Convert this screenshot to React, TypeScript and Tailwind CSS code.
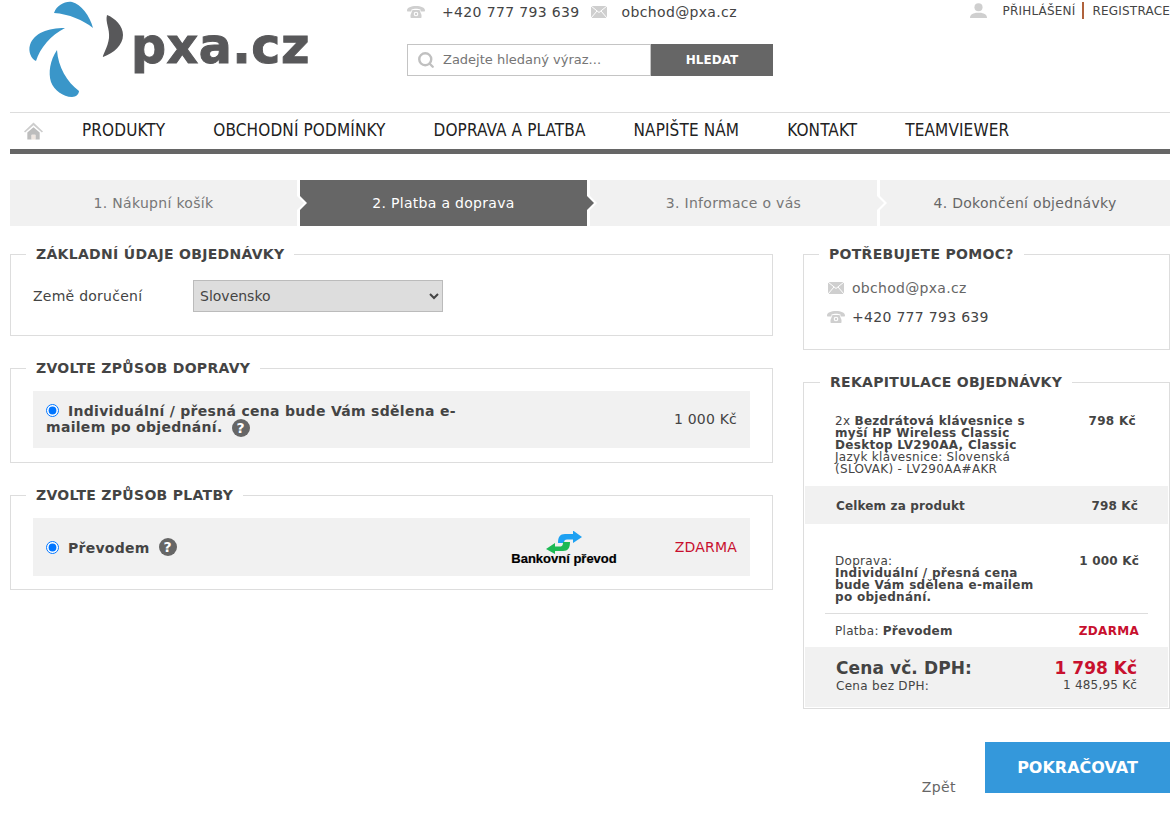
import { Search } from "lucide-react";

const font = { fontFamily: '"DejaVu Sans", sans-serif' };

function PhoneIcon({ className }: { className?: string }) {
  return (
    <svg viewBox="0 0 18 12" className={className} fill="#cfcfcf">
      <path d="M0 4.5C0 1.5 4 0 9 0s9 1.5 9 4.500c0 .8-.3 1-1 1h-2.500c-.7 0-1-.3-1-1V3.500c-1-.6-2.800-.8-4.500-.8s-3.500.2-4.500.8v1c0 .7-.3 1-1 1H1c-.7 0-1-.2-1-1z" />
      <path d="M5.500 4h7l2 5v2.200c0 .5-.3.8-.8.8H4.300c-.5 0-.8-.3-.8-.8V9z" />
      <circle cx="9" cy="8" r="2.300" fill="#fff" />
      <circle cx="9" cy="8" r="1.200" />
    </svg>
  );
}

function MailIcon({ className }: { className?: string }) {
  return (
    <svg viewBox="0 0 16 12" className={className}>
      <rect width="16" height="12" fill="#cfcfcf" />
      <path d="M0 0 8 6.500 16 0M0 12 6 5M16 12l-6-7" stroke="#fff" strokeWidth="1" fill="none" />
    </svg>
  );
}

function Help() {
  return (
    <span className="inline-flex w-[18px] h-[18px] rounded-full bg-[#666] text-white text-[14px] font-bold items-center justify-center align-middle leading-none">
      ?
    </span>
  );
}

function Logo() {
  return (
    <div className="flex items-start w-[310px] h-[100px]">
      <svg viewBox="10 0 121 100" className="w-[121px] h-[100px] shrink-0">
        <path d="M54 13C57 5 65 1 72 2c9 2 18 14 21 26-10-8-24-14-39-15z" fill="#3a96c9" />
        <path d="M65 28c-17 0-31 5-35 17-2 6 1 14 6 16 4-13 15-26 29-33z" fill="#3a96c9" />
        <path d="M57 50c-7 10-9 23-6 32 3 8 12 15 21 15 4 0 7-3 7-6-12-9-21-24-22-41z" fill="#3a96c9" />
        <path d="M107 15c8 3 16 11 16 20 0 10-9 18-20 22-1-1 5-10 6-19 1-9-4-16-2-23z" fill="#58585a" />
      </svg>
      <span
        className="text-[#58585a] font-bold text-[49px] leading-none mt-[22px] tracking-[0.5px]"
        style={{ WebkitTextStroke: "1px #58585a" }}
      >
        pxa.cz
      </span>
    </div>
  );
}

function Header() {
  return (
    <div className="flex h-[112px]">
      <div className="w-[397px] shrink-0">
        <Logo />
      </div>
      <div className="w-[366px] shrink-0 pt-[3px]">
        <div className="flex items-center text-[14px] text-[#444] h-[18px] tracking-[0.35px]">
          <PhoneIcon className="w-[18px] h-[12px]" />
          <span className="ml-[17px]">+420 777 793 639</span>
          <MailIcon className="w-[16px] h-[12px] ml-[11px]" />
          <span className="ml-[15px]">obchod@pxa.cz</span>
        </div>
        <div className="flex mt-[23px] h-[32px]">
          <div className="w-[244px] border border-[#c4c4c4] flex items-center pl-[9px]">
            <Search className="w-[18px] h-[18px] text-[#c0c0c0]" strokeWidth={3.2} />
            <span className="ml-[8px] text-[13px] text-[#757575]">Zadejte hledaný výraz...</span>
          </div>
          <div className="w-[122px] bg-[#666] text-white text-[12px] font-bold flex items-center justify-center">
            HLEDAT
          </div>
        </div>
      </div>
      <div className="flex-1 flex justify-end items-start pt-[2px] text-[12px] text-[#444] tracking-[0.2px]">
        <svg viewBox="0 0 16 14" className="w-[17px] h-[15px] mt-[1px] mr-[15px]" fill="#cfcfcf">
          <circle cx="8" cy="4" r="3.800" />
          <path d="M0 14c0-3 2-4 5.500-5h5c3.500 1 5.500 2 5.500 5z" />
        </svg>
        <span>PŘIHLÁŠENÍ</span>
        <span className="w-[2px] h-[17px] bg-[#b0623c] ml-[7px] mr-[8px]" />
        <span>REGISTRACE</span>
      </div>
    </div>
  );
}

function Nav() {
  const items = ["PRODUKTY", "OBCHODNÍ PODMÍNKY", "DOPRAVA A PLATBA", "NAPIŠTE NÁM", "KONTAKT", "TEAMVIEWER"];
  return (
    <div className="border-t border-[#ddd] border-b-[5px] border-b-[#666] h-[42px] flex items-center">
      <svg viewBox="0 0 20 18" className="w-[19px] h-[18px] ml-[14px] mr-[39px]">
        <path d="M10 0 0 9.500l1.200 1.200L10 3l8.800 7.700L20 9.500z" fill="#cdcdcd" />
        <path d="M3.500 10.500 10 5l6.500 5.500V18H12v-5H8v5H3.500z" fill="#bdbdbd" />
        <rect x="8" y="13" width="4" height="5" fill="#efe6e0" />
      </svg>
      <div
        className="flex gap-[48px] text-[17px] text-[#222] -mt-[1px] tracking-[0.13px]"
        style={{ fontStretch: "condensed" }}
      >
        {items.map((item) => (
          <span key={item}>{item}</span>
        ))}
      </div>
    </div>
  );
}

function Steps() {
  const steps = ["1. Nákupní košík", "2. Platba a doprava", "3. Informace o vás", "4. Dokončení objednávky"];
  return (
    <div className="flex gap-[3px] mt-[26px] h-[46px] text-[14px] tracking-[0.3px]">
      {steps.map((step, i) => (
        <div
          key={step}
          className={
            i === 1
              ? "relative w-[287px] bg-[#666] text-white flex items-center justify-center"
              : i === 3
                ? "relative flex-1 bg-[#f1f1f1] text-[#666] flex items-center justify-center"
                : "relative w-[287px] bg-[#f1f1f1] text-[#777] flex items-center justify-center"
          }
        >
          {step}
          {i < 3 && (
            <>
              <span className="absolute z-10 left-full top-1/2 -translate-y-1/2 w-0 h-0 border-y-[10px] border-y-transparent border-l-[10px] border-l-white" />
              <span
                className={
                  i === 1
                    ? "absolute z-10 left-full top-1/2 -translate-y-1/2 w-0 h-0 border-y-[7px] border-y-transparent border-l-[7px] border-l-[#666]"
                    : "absolute z-10 left-full top-1/2 -translate-y-1/2 w-0 h-0 border-y-[7px] border-y-transparent border-l-[7px] border-l-[#f1f1f1]"
                }
              />
            </>
          )}
        </div>
      ))}
    </div>
  );
}

function Box({ title, className, children }: { title: string; className?: string; children: React.ReactNode }) {
  return (
    <fieldset className={"border border-[#ddd] " + (className || "")}>
      <legend className="ml-[15px] px-[10px] text-[14px] font-bold text-[#444] tracking-[0.3px] leading-[20px]">
        {title}
      </legend>
      {children}
    </fieldset>
  );
}

function Left() {
  return (
    <div className="w-[763px] shrink-0">
      <Box title="ZÁKLADNÍ ÚDAJE OBJEDNÁVKY" className="h-[92px] mt-[18px]">
        <div className="flex items-center pl-[22px] pt-[16px] text-[14px] text-[#444] tracking-[0.25px]">
          <span className="w-[160px]">Země doručení</span>
          <select
            defaultValue="Slovensko"
            className="w-[250px] h-[32px] bg-[#ddd] border border-[#bbb] pl-[2px] text-[14px] text-[#444] tracking-normal"
            style={{ ...font, appearance: "auto" }}
          >
            <option>Slovensko</option>
          </select>
        </div>
      </Box>
      <Box title="ZVOLTE ZPŮSOB DOPRAVY" className="h-[105px] mt-[22px]">
        <div className="mx-[22px] mt-[13px] h-[57px] bg-[#f1f1f1] flex items-center justify-between pl-[13px] pr-[13px]">
          <div className="w-[430px] text-[14px] font-bold text-[#444] leading-[16px] tracking-[0.3px]">
            <input type="radio" defaultChecked className="mr-[9px] align-[-1px]" />
            Individuální / přesná cena bude Vám sdělena e-mailem po objednání.{" "}
            <span className="ml-[4px]"><Help /></span>
          </div>
          <span className="text-[14px] text-[#444] tracking-[0.2px]">1 000 Kč</span>
        </div>
      </Box>
      <Box title="ZVOLTE ZPŮSOB PLATBY" className="h-[105px] mt-[22px]">
        <div className="mx-[22px] mt-[13px] h-[58px] bg-[#f1f1f1] flex items-center pl-[13px] pr-[13px]">
          <div className="w-[464px] pt-[2px] text-[14px] font-bold text-[#444] tracking-[0.25px]">
            <input type="radio" defaultChecked className="mr-[9px] align-[-1px]" />
            Převodem <span className="ml-[4px] relative -top-[2px]"><Help /></span>
          </div>
          <div className="w-[108px] flex flex-col items-center">
            <svg viewBox="546 530 36 23" className="w-[36px] h-[23px]">
              <path d="M558 542c0-6 2-9 7-9h8v-3.500l9 6.500-9 6v-3.500h-6c-2 0-3 1-3 3.500z" fill="#1ea1f2" />
              <path d="M570 541c0 6-2 9-7 9h-8v3l-9-5 9-6v3.500h5c2 0 3-1 3-4.500z" fill="#1db954" />
            </svg>
            <span
              className="text-[13px] font-bold text-black leading-[10px] whitespace-nowrap"
              style={{ fontFamily: '"Liberation Sans", sans-serif', WebkitTextStroke: "0.2px #000" }}
            >
              Bankovní převod
            </span>
          </div>
          <span className="ml-auto text-[14px] text-[#c8102e] tracking-[0.2px]">ZDARMA</span>
        </div>
      </Box>
    </div>
  );
}

function Right() {
  return (
    <div className="w-[367px] shrink-0 ml-[30px]">
      <Box title="POTŘEBUJETE POMOC?" className="h-[106px] mt-[18px]">
        <div className="pl-[24px] pt-[13px] text-[14px] text-[#444] tracking-[0.3px]">
          <div className="flex items-center h-[22px] text-[#666]">
            <MailIcon className="w-[16px] h-[12px]" />
            <span className="ml-[8px]">obchod@pxa.cz</span>
          </div>
          <div className="flex items-center h-[22px] mt-[7px]">
            <PhoneIcon className="w-[18px] h-[12px] -ml-[1px]" />
            <span className="ml-[7px]">+420 777 793 639</span>
          </div>
        </div>
      </Box>
      <Box title="REKAPITULACE OBJEDNÁVKY" className="h-[337px] mt-[22px] px-[1px]">
        <div className="flex justify-between pl-[30px] pr-[32px] pt-[23px] text-[12px] leading-[12px] text-[#444] tracking-[0.3px] h-[94px]">
          <div className="w-[200px]">
            2x <b>Bezdrátová klávesnice s myší HP Wireless Classic Desktop LV290AA, Classic</b>
            <br />
            Jazyk klávesnice: Slovenská (SLOVAK) - LV290AA#AKR
          </div>
          <b>798 Kč</b>
        </div>
        <div className="flex justify-between items-center h-[38px] pt-[1px] bg-[#f1f1f1] pl-[31px] pr-[30px] text-[12px] font-bold text-[#444] tracking-[0.15px]">
          <span>Celkem za produkt</span>
          <span>798 Kč</span>
        </div>
        <div className="flex justify-between pl-[30px] pr-[29px] pt-[31px] text-[12px] leading-[12px] text-[#444] tracking-[0.3px]">
          <div className="w-[205px]">
            Doprava:
            <br />
            <b>Individuální / přesná cena bude Vám sdělena e-mailem po objednání.</b>
          </div>
          <b className="tracking-[0.2px]">1 000 Kč</b>
        </div>
        <div className="mx-[20px] mt-[10px] border-t border-[#ddd]" />
        <div className="flex justify-between items-center pl-[30px] pr-[29px] h-[33px] text-[12px] text-[#444] tracking-[0.3px]">
          <span>
            Platba: <b className="tracking-[0.2px]">Převodem</b>
          </span>
          <b className="text-[#c8102e]">ZDARMA</b>
        </div>
        <div className="h-[60px] bg-[#f1f1f1] pl-[31px] pr-[31px] pt-[11px] flex justify-between text-[#444]">
          <div>
            <div className="text-[17px] font-bold leading-[20px] tracking-[0.1px]">Cena vč. DPH:</div>
            <div className="text-[12px] leading-[15px] mt-[1px] tracking-[0.3px]">Cena bez DPH:</div>
          </div>
          <div className="text-right">
            <div className="text-[17px] font-bold leading-[20px] text-[#c8102e]">1 798 Kč</div>
            <div className="text-[12px] leading-[14px] tracking-[0.2px]">1 485,95 Kč</div>
          </div>
        </div>
      </Box>
    </div>
  );
}

export default function App() {
  return (
    <div className="pl-[10px] pr-[1px] h-[825px] bg-white overflow-hidden" style={font}>
      <Header />
      <Nav />
      <Steps />
      <div className="flex">
        <Left />
        <Right />
      </div>
      <div className="flex justify-end items-start mt-[33px]">
        <span className="text-[14px] text-[#666] mt-[35px] mr-[29px] tracking-[0.4px]">Zpět</span>
        <div className="w-[185px] h-[51px] bg-[#3498db] text-white text-[16px] font-bold flex items-center justify-center">
          POKRAČOVAT
        </div>
      </div>
    </div>
  );
}
